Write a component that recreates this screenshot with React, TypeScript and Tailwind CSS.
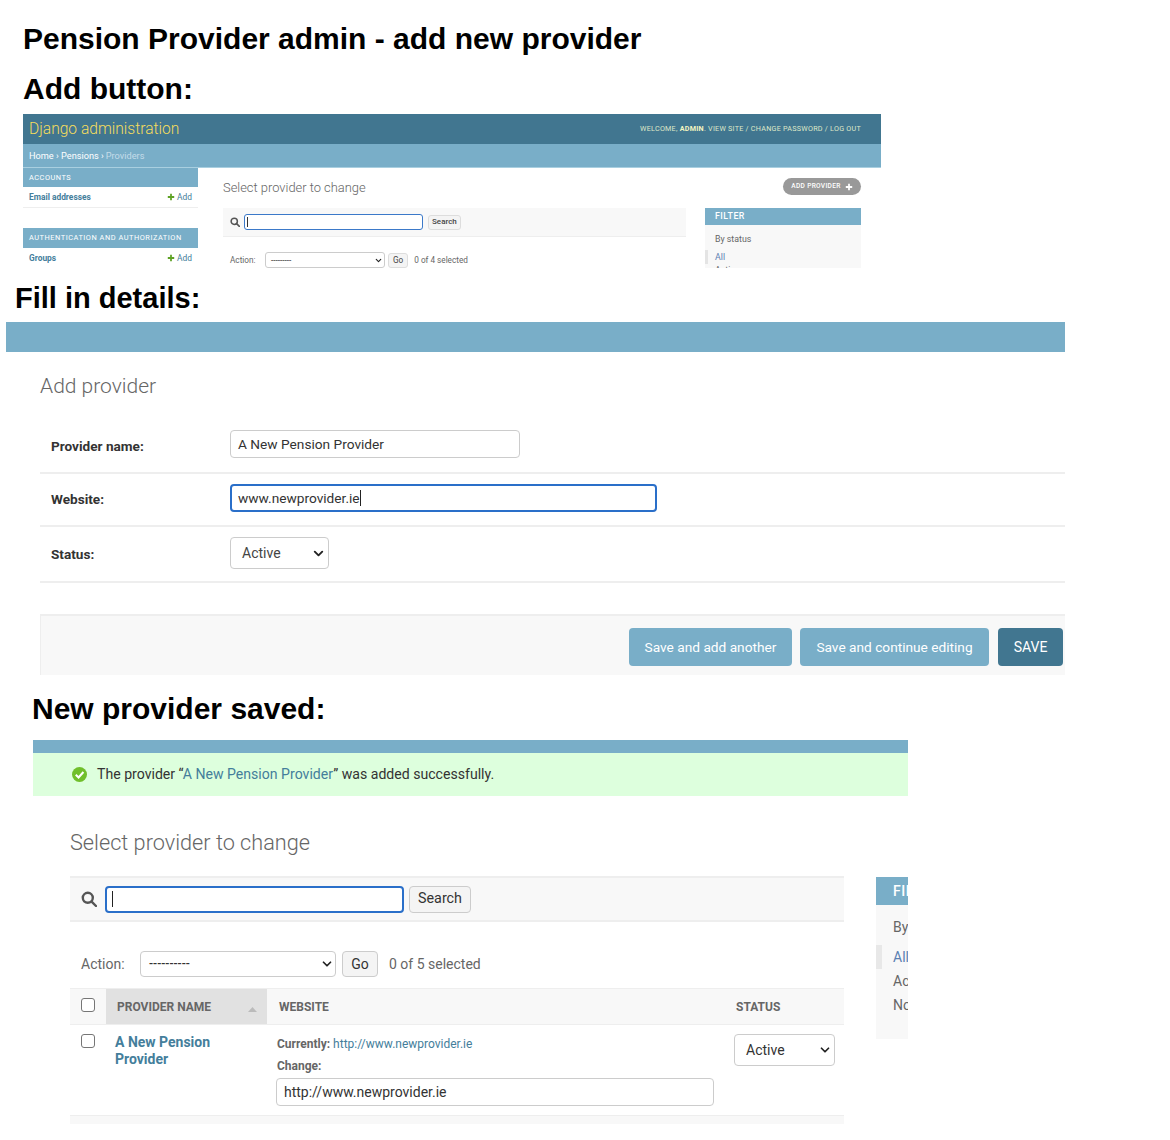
import { ChevronDown } from 'lucide-react'

const roboto = 'font-["Roboto",_"Liberation_Sans",_sans-serif]'

function SearchIcon({ size, color }: { size: number; color: string }) {
  return (
    <svg width={size} height={size} viewBox="0 0 16 16" fill="none" stroke={color} strokeWidth="2.4" className="shrink-0">
      <circle cx="6.8" cy="6.8" r="5" />
      <path d="M10.6 10.6 15 15" strokeLinecap="round" />
    </svg>
  )
}

function PlusIcon({ size, color }: { size: number; color: string }) {
  return (
    <svg width={size} height={size} viewBox="0 0 10 10" className="shrink-0">
      <path d="M5 1v8M1 5h8" stroke={color} strokeWidth="2.2" />
    </svg>
  )
}

function FakeSelect({ label, className, chevron, stroke = 3 }: { label: string; className: string; chevron: number; stroke?: number }) {
  return (
    <div className={`flex items-center justify-between bg-white border border-[#ccc] ${className}`}>
      <span>{label}</span>
      <ChevronDown size={chevron} strokeWidth={stroke} color="#222" />
    </div>
  )
}

function Checkbox() {
  return <div className="h-[14px] w-[14px] rounded-[3px] border border-[#767676] bg-white" />
}

function Heading({ children, className }: { children: React.ReactNode; className: string }) {
  return <h2 className={`font-bold leading-[36px] text-black ${className}`}>{children}</h2>
}

function AddButtonShot() {
  return (
    <div className={`ml-[23px] mt-[7px] h-[154px] w-[858px] overflow-hidden bg-white ${roboto}`}>
      <div className="flex h-[30px] items-center justify-between bg-[#417690] pl-[6px] pr-[20px]">
        <span className="pt-[1px] text-[15.6px] font-light text-[#f5dd5d]">Django administration</span>
        <span className="text-[7.2px] uppercase tracking-[0.25px] text-[#dfe8c8]">
          Welcome, <b className="text-[#f5f5c0]">admin</b>. View site / Change password / Log out
        </span>
      </div>
      <div className="flex h-[24px] items-center border-b border-[#a9cfe0] bg-[#79aec8] pl-[6px] pt-[1px] text-[9.2px] text-white">
        Home › Pensions › <span className="ml-[2px] text-[#c4dce8]">Providers</span>
      </div>
      <div className="flex">
        <div className="w-[175px] shrink-0 text-[8.4px]">
          <div className="flex h-[19px] items-center bg-[#79aec8] pl-[6px] text-[7.4px] tracking-[0.5px] text-white">ACCOUNTS</div>
          <div className="flex h-[21px] items-center justify-between border-b border-[#eee] px-[6px] font-bold text-[#447e9b]">
            Email addresses
            <span className="flex items-center gap-[2px] font-normal"><PlusIcon size={8} color="#5fa225" />Add</span>
          </div>
          <div className="h-[20px]" />
          <div className="flex h-[20px] items-center bg-[#79aec8] pl-[6px] text-[7.4px] tracking-[0.52px] text-white">AUTHENTICATION AND AUTHORIZATION</div>
          <div className="flex h-[21px] items-center justify-between px-[6px] font-bold text-[#447e9b]">
            Groups
            <span className="flex items-center gap-[2px] font-normal"><PlusIcon size={8} color="#5fa225" />Add</span>
          </div>
        </div>
        <div className="min-w-0 flex-1 pl-[25px] pr-[20px]">
          <div className="flex h-[40px] items-center justify-between">
            <span className="text-[12.9px] font-light text-[#666]">Select provider to change</span>
            <span className="mb-[3px] flex h-[17px] w-[78px] items-center justify-center gap-[4px] rounded-full bg-[#999] text-[6.6px] font-medium tracking-[0.3px] text-white">
              ADD PROVIDER <PlusIcon size={8} color="#fff" />
            </span>
          </div>
          <div className="flex gap-[19px]">
            <div className="w-[463px] shrink-0">
              <div className="flex h-[29px] items-center gap-[4px] border-b border-[#eee] bg-[#f8f8f8] pl-[7px]">
                <SearchIcon size={10} color="#555" />
                <div className="flex h-[16px] w-[179px] items-center rounded-[3px] border-[1.5px] border-[#3b79c9] bg-white pl-[2px]">
                  <div className="h-[10px] w-px bg-[#333]" />
                </div>
                <span className="ml-[1px] flex h-[15px] items-center rounded-[3px] border border-[#ddd] bg-[#f4f4f4] px-[3px] text-[8px] font-medium text-[#444]">Search</span>
              </div>
              <div className="mt-[15px] flex items-center text-[8.2px] text-[#666]">
                <span className="ml-[7px] w-[35px]">Action:</span>
                <FakeSelect label="---------" chevron={9} className="h-[16px] w-[120px] rounded-[3px] pl-[5px] pr-[1px] text-[#333]" />
                <span className="ml-[3px] flex h-[15px] items-center rounded-[3px] border border-[#ddd] bg-[#f4f4f4] px-[4px] text-[#444]">Go</span>
                <span className="ml-[6px]">0 of 4 selected</span>
              </div>
            </div>
            <div className="h-[61px] w-[156px] overflow-hidden bg-[#f8f8f8] text-[8.8px]">
              <div className="flex h-[17px] items-center bg-[#79aec8] pl-[10px] font-medium tracking-[0.5px] text-white">FILTER</div>
              <div className="pl-[10px] pt-[8px] text-[#666]">By status</div>
              <div className="mt-[4px] flex h-[14px] items-center border-l-[3px] border-[#e4e4e4] pl-[7px] text-[#5b80b2]">All</div>
              <div className="pl-[10px] text-[#666]">Active</div>
            </div>
          </div>
        </div>
      </div>
    </div>
  )
}

function FormRow({ label, height, children }: { label: string; height: number; children: React.ReactNode }) {
  return (
    <div style={{ height }} className="flex items-center border-b-2 border-[#eee] pl-[11px]">
      <span className="w-[179px] shrink-0 text-[13.6px] font-bold text-[#333]">{label}</span>
      {children}
    </div>
  )
}

function DetailsShot() {
  const secondary = 'flex h-[38px] items-center justify-center rounded-[4px] bg-[#79aec8] text-[13.7px] text-white'
  return (
    <div className={`ml-[6px] mt-[6px] h-[353px] w-[1059px] overflow-hidden bg-white ${roboto}`}>
      <div className="h-[30px] bg-[#79aec8]" />
      <div className="pl-[34px]">
        <div className="flex h-[69px] items-center text-[21px] font-light text-[#666]">Add provider</div>
        <FormRow label="Provider name:" height={53}>
          <div className="mb-[5px] flex h-[28px] w-[290px] items-center rounded-[4px] border border-[#ccc] pl-[7px] text-[13.7px] text-[#333]">A New Pension Provider</div>
        </FormRow>
        <FormRow label="Website:" height={53}>
          <div className="mb-[3px] flex h-[28px] w-[427px] items-center rounded-[4px] border-2 border-[#2a6fc9] pl-[6px] text-[13.7px] text-[#333]">
            www.newprovider.ie<span className="h-[16px] w-px bg-[#222]" />
          </div>
        </FormRow>
        <FormRow label="Status:" height={56}>
          <FakeSelect label="Active" chevron={15} className="mb-[2px] h-[32px] w-[99px] rounded-[4px] pl-[11px] pr-[2px] text-[14px] text-[#444]" />
        </FormRow>
        <div className="mt-[31px] flex h-[61px] justify-end border-l border-t-2 border-[#eee] bg-[#f8f8f8] pr-[2px] pt-[12px]">
          <div className={`${secondary} w-[163px]`}>Save and add another</div>
          <div className={`${secondary} ml-[8px] w-[189px]`}>Save and continue editing</div>
          <div className="ml-[9px] flex h-[38px] w-[65px] items-center justify-center rounded-[4px] bg-[#417690] text-[14px] text-white">SAVE</div>
        </div>
      </div>
    </div>
  )
}

function SavedShot() {
  const th = 'flex items-center px-[10px] text-[12px] font-bold text-[#666]'
  return (
    <div className={`ml-[33px] mt-[13px] h-[384px] w-[875px] overflow-hidden bg-white ${roboto}`}>
      <div className="h-[13px] bg-[#79aec8]" />
      <div className="flex h-[43px] items-center gap-[10px] bg-[#ddffdd] pl-[39px] text-[14.1px] text-[#333]">
        <svg width="15" height="15" viewBox="0 0 16 16">
          <circle cx="8" cy="8" r="8" fill="#70bf2b" />
          <path d="M4 8.3 7 11.2 12.2 5.4" fill="none" stroke="#fff" strokeWidth="2.2" />
        </svg>
        <span>The provider “<span className="text-[#447e9b]">A New Pension Provider</span>” was added successfully.</span>
      </div>
      <div className="flex pl-[37px]">
        <div className="w-[774px] shrink-0">
          <div className="flex h-[80px] items-center pt-[14px] text-[21.7px] font-light text-[#666]">Select provider to change</div>
          <div className="flex h-[46px] items-center border-y-2 border-[#eee] bg-[#f8f8f8] pl-[11px]">
            <SearchIcon size={16} color="#555" />
            <div className="ml-[8px] flex h-[27px] w-[299px] items-center rounded-[4px] border-2 border-[#2a6fc9] bg-white pl-[5px]">
              <div className="h-[16px] w-px bg-[#222]" />
            </div>
            <span className="ml-[5px] flex h-[27px] w-[62px] items-center justify-center rounded-[4px] border border-[#ccc] bg-[#f4f4f4] text-[14.3px] text-[#333]">Search</span>
          </div>
          <div className="flex h-[66px] items-center pt-[18px] text-[14px] text-[#666]">
            <span className="ml-[11px] w-[59px]">Action:</span>
            <FakeSelect label="----------" chevron={14} className="h-[26px] w-[196px] rounded-[4px] pl-[8px] pr-[1px] text-[12px] font-medium text-[#333]" />
            <span className="ml-[6px] flex h-[26px] w-[36px] items-center justify-center rounded-[4px] border border-[#ccc] bg-[#f4f4f4] text-[#333]">Go</span>
            <span className="ml-[11px]">0 of 5 selected</span>
          </div>
          <div className="grid h-[37px] grid-cols-[36px_161px_459px_118px] border-y border-[#eee] bg-[#f8f8f8]">
            <div className="flex justify-center pt-[9px]"><Checkbox /></div>
            <div className={`${th} justify-between bg-[#e1e1e1] pl-[11px]`}>
              PROVIDER NAME
              <svg width="9" height="5" viewBox="0 0 9 5" className="mt-[6px]"><path d="M0 5 4.5 0 9 5z" fill="#bbb" /></svg>
            </div>
            <div className={`${th} pl-[12px]`}>WEBSITE</div>
            <div className={`${th}`}>STATUS</div>
          </div>
          <div className="grid h-[91px] grid-cols-[36px_161px_459px_118px] border-b border-[#eee]">
            <div className="flex justify-center pt-[9px]"><Checkbox /></div>
            <div className="pl-[9px] pt-[9px] text-[14px] font-bold leading-[17px] text-[#447e9b]">A New Pension<br />Provider</div>
            <div className="pl-[10px] pt-[10px] text-[12px] text-[#666]">
              <div><b>Currently:</b> <span className="text-[#447e9b]">http://www.newprovider.ie</span></div>
              <div className="mt-[4px] font-bold">Change:</div>
              <div className="-ml-px mt-[3px] flex h-[28px] w-[438px] items-center rounded-[4px] border border-[#ccc] pl-[7px] text-[14px] text-[#333]">http://www.newprovider.ie</div>
            </div>
            <div className="pl-[8px] pt-[9px]">
              <FakeSelect label="Active" chevron={14} className="h-[32px] w-[101px] rounded-[4px] pl-[11px] pr-[2px] text-[14px] text-[#333]" />
            </div>
          </div>
          <div className="h-[9px] bg-[#f8f8f8]" />
        </div>
        <div className="ml-[32px] mt-[81px] h-[162px] w-[32px] shrink-0 overflow-hidden whitespace-nowrap bg-[#f8f8f8] text-[14px] text-[#666]">
          <div className="flex h-[28px] items-center bg-[#79aec8] pl-[17px] font-medium tracking-[0.5px] text-white">FILTER</div>
          <div className="pl-[17px] pt-[12px]">By status</div>
          <div className="mt-[7px] flex h-[24px] items-center border-l-[6px] border-[#e8e8e8] pl-[11px] text-[#5b80b2]">All</div>
          <div className="pl-[17px] leading-[24px]">Active</div>
          <div className="pl-[17px] leading-[24px]">Not active</div>
        </div>
      </div>
    </div>
  )
}

export default function App() {
  return (
    <div className="min-h-[1140px] w-[1170px] bg-white pt-[21px] font-['Liberation_Sans',_Arial,_sans-serif]">
      <Heading className="ml-[23px] text-[30px]">Pension Provider admin - add new provider</Heading>
      <Heading className="ml-[23px] mt-[14px] text-[30px]">Add button:</Heading>
      <AddButtonShot />
      <Heading className="ml-[15px] mt-[12px] text-[29px]">Fill in details:</Heading>
      <DetailsShot />
      <Heading className="ml-[32px] mt-[16px] text-[30px]">New provider saved:</Heading>
      <SavedShot />
    </div>
  )
}
